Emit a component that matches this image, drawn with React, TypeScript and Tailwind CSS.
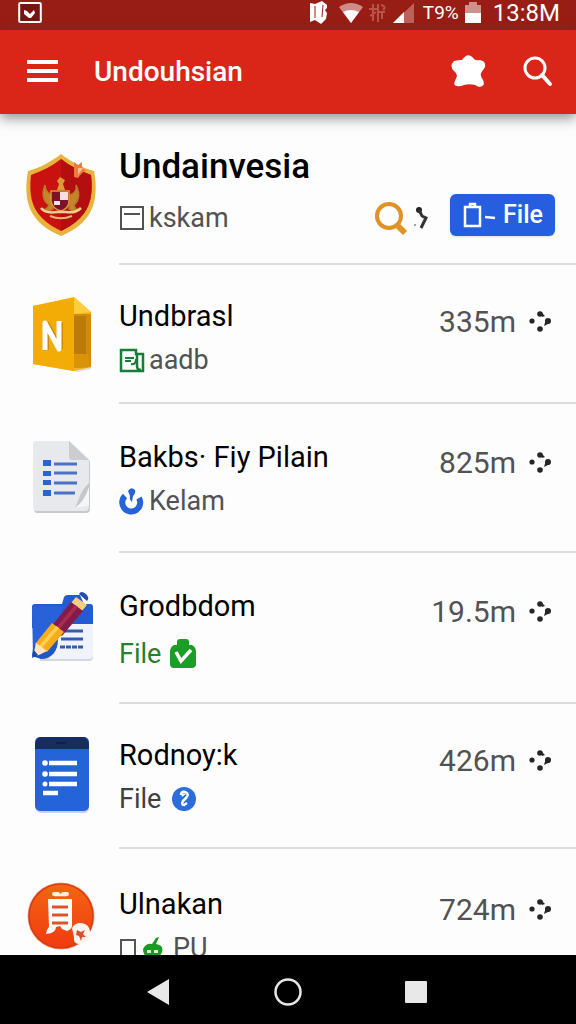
import type { ReactNode } from "react";

interface FileRow {
  title: string;
  size: string;
  icon: ReactNode;
  subtitle: ReactNode;
  iconClass: string;
  rowClass: string;
  subtitleClass: string;
}

function ShieldIcon() {
  return (
    <svg width="72" height="84" viewBox="0 0 72 84" aria-hidden="true">
      <path d="M36 1 C26 9 14 15 3 18 C-1 40 2 57 14 69 C21 76 29 80 36 83 C43 80 51 76 58 69 C70 57 73 40 69 18 C58 15 46 9 36 1Z" fill="#e9b23c" />
      <path d="M36 6 C27 13 17 18 6 22 C4 40 6 54 17 65 C23 71 30 75 36 78 C42 75 49 71 55 65 C66 54 68 40 66 22 C55 18 45 13 36 6Z" fill="#c9120f" />
      <path d="M36 6 C45 13 55 18 66 22 C68 40 66 54 55 65 C49 71 42 75 36 78Z" fill="#b30f10" />
      <path d="M27 42 C22 40 20 36 20 32 C16 42 19 49 24 52 C22 56 20 57 18 56 L22 59 L28 56Z M45 42 C50 40 52 36 51 32 C56 42 53 49 49 52 C50 56 52 57 54 56 L50 59 L44 56Z" fill="#c4862b" stroke="#b9782a" strokeWidth="1.5" />
      <path d="M32 28 L35 24 L40 27 L38 31 L40 37 H32 L34 31Z" fill="#d99b38" />
      <path d="M26 38 H44 V48 C44 54 39 57 36 58 C32 57 27 54 26 48Z" fill="#7c1326" stroke="#d99b38" strokeWidth="1.5" />
      <path d="M35 39 H43 V47 H35Z M29 48 H35 V52 H29Z" fill="#f3dfe5" />
      <path d="M16 55 C20 60 26 60 32 59 H41 C47 60 52 59 56 55" fill="none" stroke="#f0cf92" strokeWidth="2.5" />
      <path d="M25 63 C32 66 40 66 47 63" fill="none" stroke="#e5b974" strokeWidth="2" />
      <path d="M49 9 L53 12 L57 9 L57 14 L61 18 L57 20 L53 25 L49 24Z" fill="#ee7b3e" />
      <path d="M53 15 L58 15 L53 22Z" fill="#ffc08a" />
    </svg>
  );
}

function NotebookIcon() {
  return (
    <svg width="60" height="76" viewBox="0 0 60 76" aria-hidden="true">
      <path d="M41 70 L59 68 V72 L44 75Z" fill="#ddd" />
      <path d="M1 9 L42 0 L59 15 V70 L42 74 L1 67Z" fill="#f3b51b" />
      <path d="M42 0 L59 15 L42 17Z" fill="#ffcd3f" />
      <path d="M42 17 H59 V70 L42 71Z" fill="#d08d08" />
      <path d="M42 19 H54 V57 H42Z" fill="#ba7b0b" />
      <path d="M42 57 H56 L59 70 L42 71Z" fill="#d99309" />
      <path d="M1 9 L42 1 V74 L1 67Z" fill="#f3ac06" />
      <path d="M14 53 V26 L28 52 V25" fill="none" stroke="#cf8b00" strokeWidth="6" />
      <path d="M13 53 V26 L27 52 V24" fill="none" stroke="#fff" strokeWidth="5" strokeLinejoin="round" />
    </svg>
  );
}

function DocumentIcon() {
  return (
    <svg width="60" height="74" viewBox="0 0 60 74" aria-hidden="true">
      <path d="M5 2 H38 L58 21 V69 Q58 73 54 73 H5 Q2 73 2 69 V5 Q2 2 5 2Z" fill="#c7c9cd" />
      <path d="M4 1 H37 L57 20 V67 Q57 71 53 71 H4 Q1 71 1 67 V4 Q1 1 4 1Z" fill="#e7e9ec" />
      <path d="M37 1 L57 20 H40 Q37 20 37 17Z" fill="#cccdd1" />
      <path d="M57 43 Q50 49 46 61 L43 68 L57 56Z" fill="#c4c7cb" />
      <path d="M57 47 Q52 62 43 68 L57 65Z" fill="#f5f6f7" />
      <path d="M11 20H19V26H11Z M11 31H19V36H11Z M11 40H19V45H11Z M11 50H19V56H11Z" fill="#2864d4" />
      <path d="M22 24H45 M22 33H45 M22 43H45 M22 53H43" stroke="#4d72c4" strokeWidth="3" />
    </svg>
  );
}

function PencilFolderIcon() {
  return (
    <svg width="64" height="74" viewBox="0 0 64 74" aria-hidden="true">
      <path d="M4 15 H59 Q63 15 63 19 V68 Q63 72 59 72 H10Z" fill="#d5d8df" />
      <path d="M2 18 Q2 15 5 15 H32 L34 8 Q35 6 38 6 H50 L54 15 H60 Q63 15 63 18 V39 H2Z" fill="#245bd2" />
      <path d="M2 17 H32 V66 L3 68Z" fill="#2961d8" />
      <path d="M27 35 H63 V66 Q63 70 59 70 H19Z" fill="#f0f3fa" />
      <path d="M32 42H53 M31 50H53" stroke="#315dae" strokeWidth="3" />
      <path d="M30 58H53" stroke="#315dae" strokeWidth="3" strokeDasharray="5 1" />
      <path d="M28 50 C28 62 22 70 11 70 L2 67 L4 57Z" fill="#1f57c8" />
      <path d="M49 5 Q51 1 56 5 Q60 9 57 12Z" fill="#264cac" />
      <path d="M46 8 L57 16 L51 23 L41 14Z" fill="#f5d083" />
      <path d="M41 13 L53 22 L32 47 L20 39Z" fill="#841c4a" />
      <path d="M45 16 L48 18 L27 43 L24 41Z" fill="#a92b50" />
      <path d="M22 34 L34 43 L17 63 L5 55Z" fill="#f6ad1a" />
      <path d="M26 37 L29 39 L12 59 L9 57Z" fill="#ffcf53" />
      <path d="M6 54 L17 62 L9 66 L3 67Z" fill="#ffe5c4" />
      <path d="M3 60 L8 66 L2 69Z" fill="#194aab" />
    </svg>
  );
}

function PhoneListIcon() {
  return (
    <svg width="58" height="78" viewBox="0 0 58 78" aria-hidden="true">
      <rect x="3" y="4" width="53" height="73" rx="5" fill="#c7d2e8" />
      <rect x="2" y="1" width="54" height="74" rx="5" fill="#2563d8" />
      <path d="M7 1 H51 Q56 3 56 9 V13 H2 V9 Q2 3 7 1Z" fill="#182d5f" />
      <path d="M23 7H33" stroke="#10204b" strokeWidth="2" />
      <path d="M16 27H44 M16 38H44 M16 48H44 M10 57H25" stroke="#fff" strokeWidth="4.5" />
      <circle cx="12" cy="27" r="2.8" fill="#fff" />
      <circle cx="12" cy="38" r="2.8" fill="#fff" />
      <circle cx="12" cy="48" r="2.5" fill="#fff" />
    </svg>
  );
}

function OrangeRoundIcon() {
  return (
    <svg width="70" height="72" viewBox="0 0 70 72" aria-hidden="true">
      <defs>
        <linearGradient id="orange-disc" x1="0" y1="0" x2="0" y2="1">
          <stop stopColor="#f26611" />
          <stop offset="1" stopColor="#f13a12" />
        </linearGradient>
      </defs>
      <circle cx="34" cy="35" r="33.5" fill="#f8a184" />
      <circle cx="34" cy="35" r="32" fill="url(#orange-disc)" stroke="#d83a10" strokeWidth="1.5" />
      <path d="M27 13H31 M36 13H40" stroke="#fff1df" strokeWidth="4" strokeLinecap="round" />
      <path d="M27 14H40" stroke="#fff1df" strokeWidth="2.5" />
      <path d="M21 18 H45 V43 Q46 48 40 50 L35 48 L33 45 L29 46 Q29 52 19 53 Q19 49 22 46Z" fill="#fff" />
      <path d="M25 26H41 M25 34H41 M25 42H41" stroke="#dd5426" strokeWidth="3" />
      <path d="M45 47 Q49 40 58 43 Q64 46 63 54 Q61 62 52 63 Q46 63 47 56Z" fill="#fff4ed" />
      <path d="M50 49 L54 51 L58 49 L56 53 L59 56 L55 56 L54 60 L52 55 L49 54Z" fill="#df4b2b" />
    </svg>
  );
}

const files: FileRow[] = [
  {
    title: "Undbrasl",
    size: "335m",
    icon: <NotebookIcon />,
    iconClass: "pt-8",
    rowClass: "pt-[35px] pb-[26px]",
    subtitleClass: "gap-1 pt-3 text-neutral-600",
    subtitle: (
      <>
        <svg width="26" height="26" viewBox="0 0 26 26" fill="none" stroke="#177d38" strokeWidth="2.5" aria-hidden="true">
          <path d="M2 3H17V7H24V24H2Z M18 8V19Q18 23 22 23" />
          <path d="M6 11H15 M6 14H12 M12 17Q17 18 17 12" strokeWidth="2" />
        </svg>
        aadb
      </>
    ),
  },
  {
    title: "Bakbs· Fiy Pilain",
    size: "825m",
    icon: <DocumentIcon />,
    iconClass: "pt-9",
    rowClass: "pt-[37px] pb-[34px]",
    subtitleClass: "gap-1 pt-3 text-neutral-600",
    subtitle: (
      <>
        <svg width="26" height="28" viewBox="0 0 26 28" aria-hidden="true">
          <path d="M6 9 A9 9 0 1 0 20 11" fill="none" stroke="#2862d9" strokeWidth="6" />
          <path d="M9 4 Q12 -1 16 3 Q17 6 14 9 L13 15 Q10 13 11 9Z" fill="#2862d9" />
        </svg>
        Kelam
      </>
    ),
  },
  {
    title: "Grodbdom",
    size: "19.5m",
    icon: <PencilFolderIcon />,
    iconClass: "pt-9",
    rowClass: "pt-[37px] pb-8",
    subtitleClass: "gap-2 pt-4 text-[#24802a]",
    subtitle: (
      <>
        File
        <svg width="28" height="32" viewBox="0 0 28 32" aria-hidden="true">
          <path d="M5 7 H8 V4 Q8 1 11 1 H17 Q20 1 20 4 V7 H23 Q27 9 27 14 V27 Q26 30 23 30 H5 Q1 30 1 26 V14 Q1 9 5 7Z" fill="#1a9e25" />
          <path d="M7 14 L12 23 L22 12" fill="none" stroke="#fff" strokeWidth="3.5" />
        </svg>
      </>
    ),
  },
  {
    title: "Rodnoy:k",
    size: "426m",
    icon: <PhoneListIcon />,
    iconClass: "pt-8",
    rowClass: "pt-[35px] pb-8",
    subtitleClass: "gap-2 pt-3 text-neutral-700",
    subtitle: (
      <>
        File
        <svg width="28" height="26" viewBox="0 0 28 26" aria-hidden="true">
          <circle cx="15" cy="13" r="12" fill="#2c6ddb" />
          <path d="M12 9 Q12 5 16 6 Q21 8 17 12 L14 15 Q12 19 15 19 L18 17" fill="none" stroke="#fff" strokeWidth="2.5" />
          <path d="M12 7 L17 8 L13 11Z" fill="#fff" />
        </svg>
      </>
    ),
  },
  {
    title: "Ulnakan",
    size: "724m",
    icon: <OrangeRoundIcon />,
    iconClass: "pt-8",
    rowClass: "pt-[39px] pb-8",
    subtitleClass: "gap-1 pt-3 text-neutral-600",
    subtitle: (
      <>
        <svg width="18" height="24" viewBox="0 0 18 24" fill="none" aria-hidden="true">
          <path d="M2 4H16V23H2Z" stroke="#555" strokeWidth="2" />
        </svg>
        <svg width="24" height="26" viewBox="0 0 24 26" aria-hidden="true">
          <path d="M2 14 Q5 8 11 9 L15 3 L18 2 L15 9 Q23 10 21 17 Q18 25 10 24 Q2 22 2 14Z" fill="#189b20" />
          <path d="M6 15H10V18H6Z M13 15H17V18H13Z" fill="#d8f2d3" />
        </svg>
        <span className="pl-1">PU</span>
      </>
    ),
  },
];

function DotsButton({ label }: { label: string }) {
  return (
    <button aria-label={label} className="text-neutral-800">
      <svg width="24" height="24" viewBox="0 0 24 24" fill="currentColor" aria-hidden="true">
        <circle cx="4" cy="11" r="2.6" />
        <circle cx="12" cy="4" r="2.8" />
        <circle cx="12" cy="19" r="2.8" />
        <circle cx="20" cy="11" r="3" />
        <path d="M13 2 L17 6 L14 7Z M16 16 L18 9 L22 13Z" />
      </svg>
    </button>
  );
}

function StatusBar() {
  return (
    <div className="flex h-[30px] shrink-0 items-start justify-between bg-[#981d15] pr-4 pl-[18px] text-white">
      <svg width="24" height="24" viewBox="0 0 24 24" fill="none" aria-hidden="true">
        <rect x="1.2" y="3" width="21.6" height="19" rx="1" fill="#771312" stroke="#fff" strokeWidth="2" />
        <path d="M6 10 L9 11 L12 14 L16 10 L17 13 L13 18 H11 L6 14Z" fill="#fff" />
      </svg>
      <div className="flex items-center">
        <svg className="mr-2" width="22" height="26" viewBox="0 0 22 26" aria-hidden="true">
          <path d="M2 3 L7 4 L14 1 L19 5 V8 L17 10 L19 13 L18 19 L13 24 L7 20 L2 22Z" fill="#fff" />
          <path d="M7 6V18 M15 5L14 17" stroke="#981d15" strokeWidth="1" />
        </svg>
        <svg className="mr-1" width="26" height="24" viewBox="0 0 26 24" aria-hidden="true">
          <path d="M1 6 Q13 -2 25 6 L13 22Z" fill="#ce8c86" />
          <path d="M5 11 Q13 7 21 11 L13 22Z" fill="#fff" />
        </svg>
        <svg className="mr-1" width="20" height="24" viewBox="0 0 20 24" fill="none" stroke="#b9544d" strokeWidth="2" aria-hidden="true">
          <path d="M5 3V20 M10 3V21 M1 8H9 M2 15L8 11 M10 11H17 M13 4Q19 5 15 9 M14 12V18" />
        </svg>
        <svg className="mr-2" width="23" height="24" viewBox="0 0 23 24" aria-hidden="true">
          <path d="M22 2 V22 H1Z" fill="#bd615a" />
          <path d="M12 11 V22 H1Z" fill="#fff" />
        </svg>
        <span className="text-[19px] leading-[26px]">T9%</span>
        <svg className="ml-1" width="20" height="24" viewBox="0 0 20 24" aria-hidden="true">
          <path d="M2 4H6V1H14V4H18V22H2Z" fill="#cf918c" />
          <path d="M2 12H18V22H2Z" fill="#fff" />
        </svg>
        <span className="pl-2.5 text-[24px] leading-[26px]">13:8M</span>
      </div>
    </div>
  );
}

export default function App() {
  return (
    <div className="flex h-screen flex-col overflow-hidden bg-[#fdfdfd] font-[Roboto,sans-serif]">
      <StatusBar />

      <header className="z-10 flex h-[84px] shrink-0 items-center bg-[#d92619] pr-[22px] pl-[26px] text-white shadow-[0_4px_12px_rgba(60,70,80,0.6)]">
        <button aria-label="Menu">
          <svg width="32" height="32" viewBox="0 0 32 32" stroke="currentColor" strokeWidth="4" aria-hidden="true">
            <path d="M1 6H32 M1 15H32 M1 24H32" />
          </svg>
        </button>
        <h1 className="flex-1 pl-9 text-[28px] leading-8 font-medium">Undouhsian</h1>
        <button aria-label="Favorite" className="pr-1">
          <svg width="36" height="36" viewBox="0 0 36 36" fill="currentColor" aria-hidden="true">
            <path d="M12 6 Q18 -3 24 5 Q26 7 30 6 Q36 7 35 13 L31 19 Q30 22 33 26 Q36 32 29 33 L25 31 Q18 29 11 32 Q2 33 5 27 L7 22 Q7 19 4 17 Q-1 12 4 7 Q8 6 12 6Z" />
          </svg>
        </button>
        <button aria-label="Search" className="pl-8">
          <svg width="32" height="32" viewBox="0 0 32 32" fill="none" stroke="currentColor" strokeWidth="3" aria-hidden="true">
            <circle cx="13" cy="12" r="10" />
            <path d="M20 19 L28 28" strokeWidth="4" strokeLinecap="round" />
          </svg>
        </button>
      </header>

      <main className="min-h-0 flex-1 overflow-hidden">
        <section className="flex">
          <div className="w-[119px] shrink-0 pt-[39px] pl-[25px]">
            <ShieldIcon />
          </div>
          <div className="min-w-0 flex-1 border-b-2 border-[#dcdcde] pt-[33px] pr-[21px] pb-[27px]">
            <h2 className="text-[35px] leading-10 font-medium text-black">Undainvesia</h2>
            <div className="flex items-center pt-[13px]">
              <span className="flex flex-1 items-center gap-1 text-[27px] leading-8 text-neutral-600">
                <svg width="26" height="26" viewBox="0 0 26 26" fill="none" stroke="currentColor" strokeWidth="2" aria-hidden="true">
                  <path d="M2 2H24V24H2Z M5 9H21" />
                </svg>
                kskam
              </span>
              <button aria-label="Find">
                <svg width="34" height="36" viewBox="0 0 34 36" fill="none" stroke="#df9226" aria-hidden="true">
                  <circle cx="15" cy="16" r="12" strokeWidth="4" />
                  <path d="M23 25 L31 33" strokeWidth="6" />
                </svg>
              </button>
              <button aria-label="More" className="pr-5 pl-1">
                <svg width="18" height="26" viewBox="0 0 18 26" aria-hidden="true">
                  <circle cx="7" cy="5" r="3" fill="#222" />
                  <path d="M7 5 L10 11 L14 13 L9 23" fill="none" stroke="#333" strokeWidth="3" />
                  <circle cx="3" cy="20" r="1" fill="#888" />
                </svg>
              </button>
              <button className="-mt-3 -mb-1.5 flex h-[42px] items-center gap-1.5 rounded-md bg-[#255fdf] px-3 text-[25px] font-medium text-white shadow-sm">
                <svg width="35" height="26" viewBox="0 0 35 26" fill="none" stroke="currentColor" strokeWidth="2.5" aria-hidden="true">
                  <path d="M3 5H18V24H3Z M8 5V2H13V5" />
                  <path d="M23 15 L33 16" />
                </svg>
                File
              </button>
            </div>
          </div>
        </section>

        <ul>
          {files.map((file) => (
            <li key={file.title} className="flex">
              <div className={`flex w-[119px] shrink-0 justify-center pl-1 ${file.iconClass}`}>{file.icon}</div>
              <div className={`flex min-w-0 flex-1 items-start border-b-2 border-[#dcdcde] pr-6 ${file.rowClass}`}>
                <div className="flex-1">
                  <h3 className="text-[29px] leading-8 text-black">{file.title}</h3>
                  <p className={`flex items-center text-[27px] leading-8 ${file.subtitleClass}`}>{file.subtitle}</p>
                </div>
                <div className="flex items-center gap-3 pt-0.5 text-[30px] leading-10 text-neutral-600">
                  {file.size}
                  <DotsButton label={`Options for ${file.title}`} />
                </div>
              </div>
            </li>
          ))}
        </ul>
      </main>

      <nav className="flex h-[69px] shrink-0 items-center justify-center gap-[100px] bg-black pt-1 text-[#e8e8e8]">
        <button aria-label="Back">
          <svg width="28" height="28" viewBox="0 0 28 28" fill="currentColor" aria-hidden="true">
            <path d="M1 14 L23 1 V27Z" />
          </svg>
        </button>
        <button aria-label="Home">
          <svg width="28" height="28" viewBox="0 0 28 28" fill="none" stroke="currentColor" strokeWidth="2.5" aria-hidden="true">
            <circle cx="14" cy="14" r="12.5" />
          </svg>
        </button>
        <button aria-label="Recent apps">
          <svg width="28" height="28" viewBox="0 0 28 28" fill="currentColor" aria-hidden="true">
            <rect x="3" y="3" width="22" height="22" rx="1" />
          </svg>
        </button>
      </nav>
    </div>
  );
}
